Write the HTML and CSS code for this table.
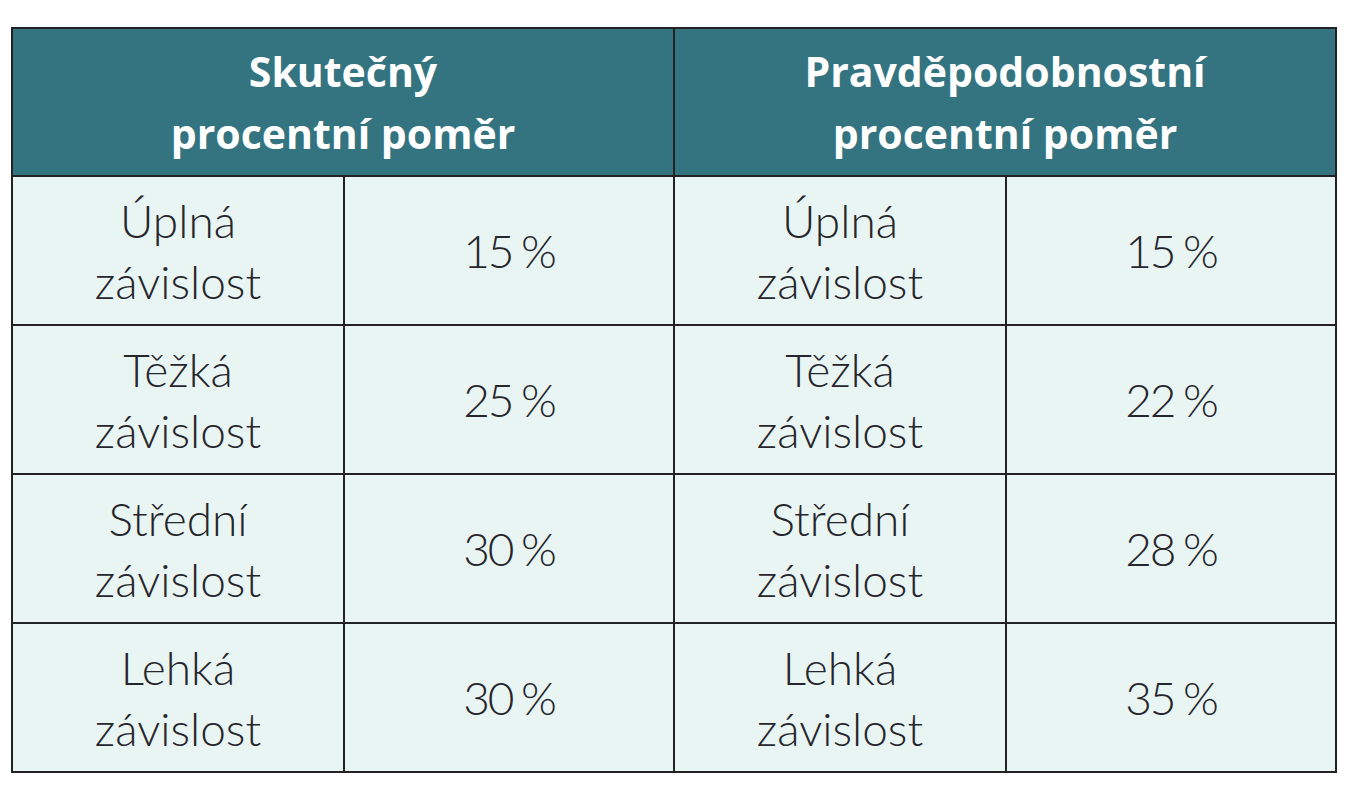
FILE: index.html
```html
<!DOCTYPE html>
<html lang="cs">
<head>
<meta charset="utf-8">
<link rel="stylesheet" href="styles.css">
</head>
<body>
<table class="grid">
  <colgroup>
    <col class="c1"><col class="c2"><col class="c3"><col class="c4">
  </colgroup>
  <thead>
    <tr class="head">
      <th colspan="2">Skutečný<br>procentní poměr</th>
      <th colspan="2">Pravděpodobnostní<br>procentní poměr</th>
    </tr>
  </thead>
  <tbody>
    <tr><td>Úplná<br>závislost</td><td class="num">15 %</td><td>Úplná<br>závislost</td><td class="num">15 %</td></tr>
    <tr><td>Těžká<br>závislost</td><td class="num">25 %</td><td>Těžká<br>závislost</td><td class="num">22 %</td></tr>
    <tr><td>Střední<br>závislost</td><td class="num">30 %</td><td>Střední<br>závislost</td><td class="num">28 %</td></tr>
    <tr><td>Lehká<br>závislost</td><td class="num">30 %</td><td>Lehká<br>závislost</td><td class="num">35 %</td></tr>
  </tbody>
</table>
</body>
</html>
```

FILE: styles.css
```css
html, body {
  margin: 0;
  padding: 0;
  background: #ffffff;
}

.grid {
  margin: 27px 0 0 11px;
  width: 1324px;
  border-collapse: collapse;
  table-layout: fixed;
  border: 2px solid #222;
}

.c1 { width: 332px; }
.c2 { width: 330px; }
.c3 { width: 332px; }
.c4 { width: 330px; }

.head th {
  height: 146px;
  background: #337480;
  color: #ffffff;
  font-family: "Open Sans", "Liberation Sans", sans-serif;
  font-weight: 700;
  font-size: 41px;
  line-height: 62px;
  text-align: center;
  vertical-align: middle;
  border: 2px solid #222;
  padding: 0;
}

td {
  height: 147px;
  background: #e8f5f3;
  color: #26262c;
  font-family: "Lato", "Liberation Sans", sans-serif;
  font-weight: 300;
  font-size: 46px;
  line-height: 61px;
  text-align: center;
  vertical-align: middle;
  border: 2px solid #222;
  padding: 0;
}

td.num {
  word-spacing: -2px;
  letter-spacing: -2px;
}
```
